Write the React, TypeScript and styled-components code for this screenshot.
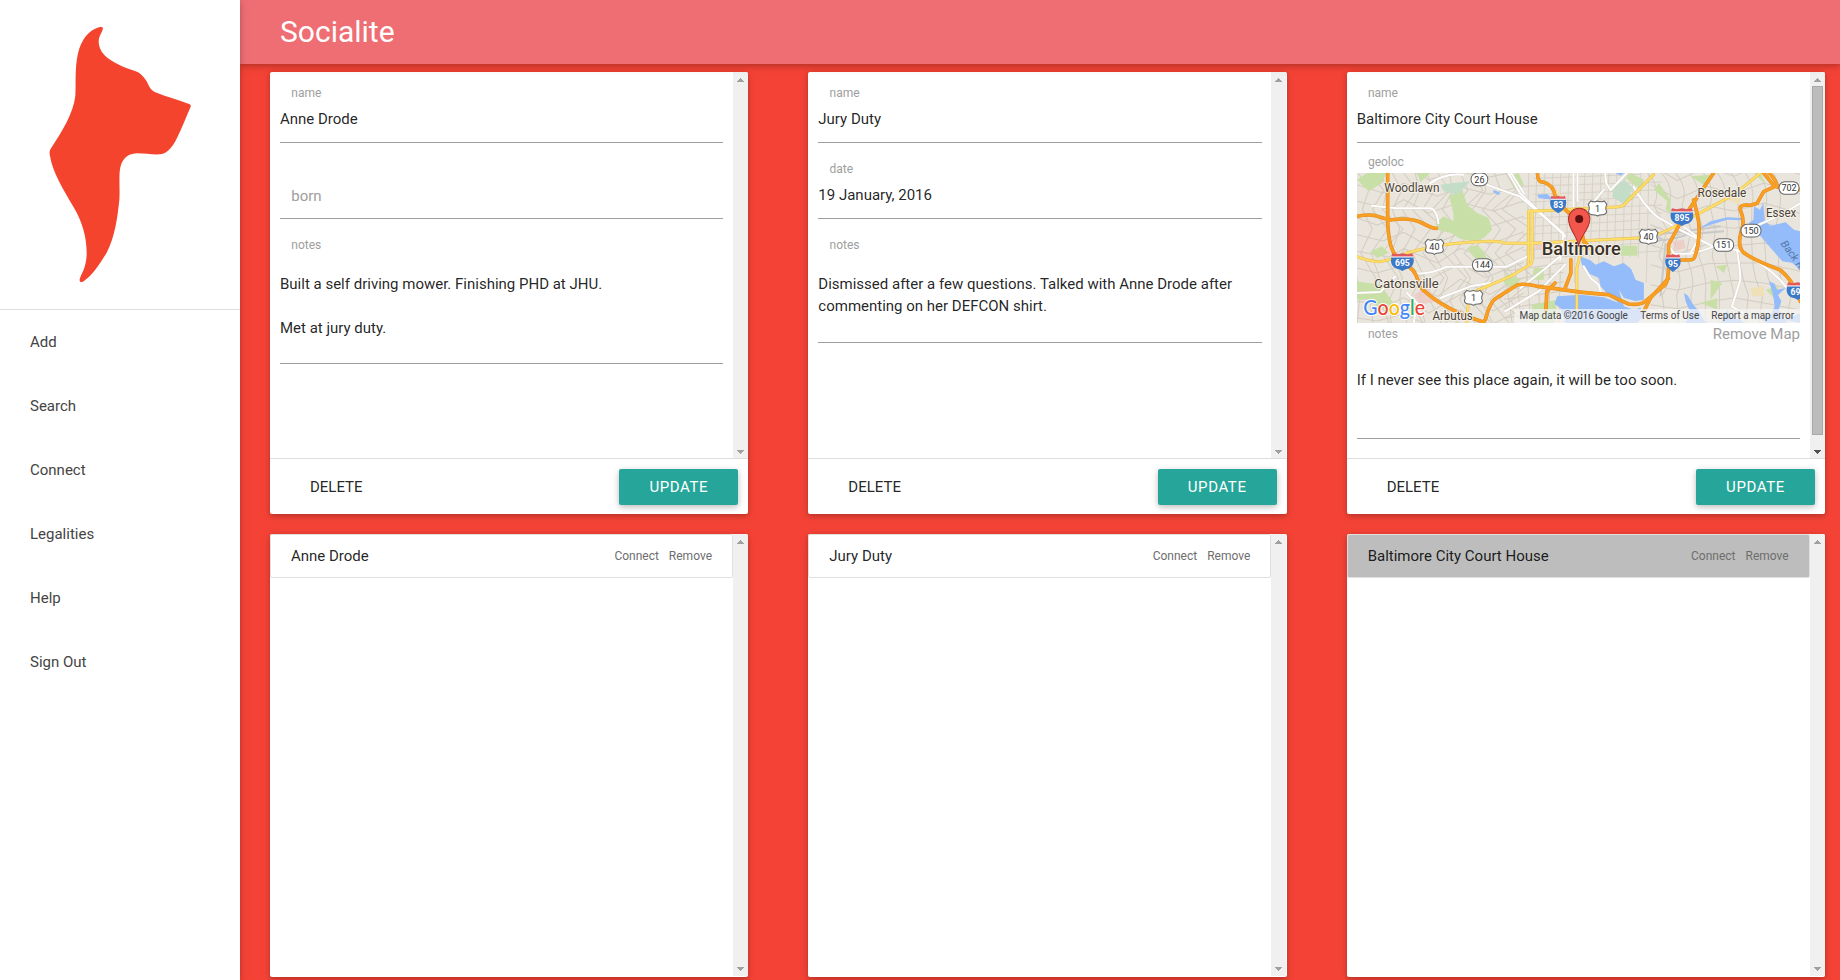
import React from "react";
import styled, { createGlobalStyle } from "styled-components";

const GlobalStyle = createGlobalStyle`
  *, *::before, *::after { box-sizing: border-box; }
  html, body { margin: 0; height: 100%; overflow: hidden; }
  body {
    background: #f44336;
    color: rgba(0, 0, 0, 0.87);
    font-family: Roboto, "Liberation Sans", sans-serif;
    font-size: 15px;
    line-height: 22px;
  }
`;

const Page = styled.div`
  display: grid;
  grid-template-columns: 240px 1fr;
  height: 980px;
  overflow: hidden;
`;

const Sidebar = styled.nav`
  z-index: 3;
  background: #fff;
  box-shadow: 0 2px 5px 0 rgba(0, 0, 0, 0.16), 0 2px 10px 0 rgba(0, 0, 0, 0.12);
`;

const LogoArea = styled.div`
  height: 310px;
  border-bottom: 1px solid #ddd;
  svg { display: block; }
`;

const NavItem = styled.a`
  display: block;
  height: 64px;
  padding-left: 30px;
  line-height: 64px;
  color: #444;
`;

const Main = styled.main`
  display: flex;
  flex-direction: column;
  min-width: 0;
`;

const Header = styled.header`
  z-index: 2;
  flex: none;
  height: 64px;
  padding-left: 40px;
  background: #ee6e73;
  box-shadow: 0 2px 5px 0 rgba(0, 0, 0, 0.16), 0 2px 10px 0 rgba(0, 0, 0, 0.12);
  color: #fff;
  font-size: 30px;
  line-height: 64px;
`;

const Board = styled.section`
  display: grid;
  grid-template-columns: repeat(3, 1fr);
  column-gap: 60px;
  padding: 8px 15px 0 30px;
`;

const Column = styled.div`
  display: flex;
  flex-direction: column;
  gap: 20px;
  min-width: 0;
`;

const Card = styled.article`
  display: flex;
  flex-direction: column;
  height: 442px;
  border-radius: 2px;
  overflow: hidden;
  background: #fff;
`;

const CardShadow = styled.div`
  border-radius: 2px;
  box-shadow: 0 2px 5px 0 rgba(0, 0, 0, 0.16), 0 2px 10px 0 rgba(0, 0, 0, 0.12);
`;

const ListCard = styled(Card)`
  height: 443px;
  padding-bottom: 1px;
`;

const ScrollArea = styled.div`
  display: flex;
  flex: 1;
  min-height: 0;
`;

const Form = styled.div`
  flex: 1;
  min-width: 0;
  padding: 0 9.66px 0 10px;
`;

const Field = styled.div<{ $first?: boolean }>`
  height: ${(p) => (p.$first ? 71 : 76)}px;
  padding-top: ${(p) => (p.$first ? 14 : 19)}px;
  border-bottom: 1px solid #9e9e9e;
`;

const Label = styled.div`
  padding-left: 11.25px;
  font-size: 12px;
  line-height: 14px;
  color: #9e9e9e;
`;

const Placeholder = styled.div`
  padding: 23px 0 0 11.25px;
  color: #9e9e9e;
`;

const Value = styled.div`
  padding-top: 8px;
`;

const Notes = styled.div`
  padding-top: 19px;
`;

const NotesText = styled.div<{ $bottom: number }>`
  margin-top: 21px;
  padding-bottom: ${(p) => p.$bottom}px;
  border-bottom: 1px solid #9e9e9e;
  white-space: pre-line;
`;

const Geo = styled.div`
  padding-top: 12px;
`;

const MapFrame = styled.div`
  height: 150px;
  margin-top: 4px;
  overflow: hidden;
  svg { display: block; width: 100%; height: 150px; }
`;

const MapFooter = styled.div`
  display: flex;
  justify-content: space-between;
  height: 25px;
  color: #9e9e9e;
  ${Label} { padding-top: 4px; }
`;

const Actions = styled.footer`
  display: flex;
  justify-content: space-between;
  flex: none;
  height: 56px;
  padding: 10px 10px 0 40px;
  border-top: 1px solid #ddd;
  text-transform: uppercase;
  line-height: 36px;
`;

const UpdateButton = styled.button`
  width: 119px;
  height: 36px;
  padding: 0;
  border: 0;
  border-radius: 2px;
  background: #26a69a;
  box-shadow: 0 2px 5px 0 rgba(0, 0, 0, 0.16), 0 2px 10px 0 rgba(0, 0, 0, 0.12);
  color: #fff;
  font: 15px/36px Roboto, sans-serif;
  letter-spacing: 0.6px;
  text-transform: uppercase;
`;

const List = styled.div`
  flex: 1;
  min-width: 0;
`;

const ListItem = styled.div<{ $selected?: boolean }>`
  display: flex;
  align-items: center;
  height: 44px;
  padding: 0 20px;
  border: 1px solid #e0e0e0;
  border-radius: 2px;
  background: ${(p) => (p.$selected ? "#bdbdbd" : "#fff")};
`;

const ItemName = styled.span`
  flex: 1;
`;

const ItemLink = styled.a`
  margin-left: 10px;
  font-size: 12px;
  color: #6e6e6e;
`;

const Track = styled.div<{ $foot: number }>`
  display: flex;
  flex-direction: column;
  align-items: center;
  flex: none;
  width: 15px;
  margin-right: 0.34px;
  padding: 6px 0 ${(p) => p.$foot}px;
  background: #f0f0f0;
`;

const Arrow = styled.svg`
  flex: none;
  display: block;
  width: 7px;
  height: 4px;
`;

const Thumb = styled.div<{ $visible?: boolean }>`
  flex: 1;
  width: 11px;
  margin: 4px 0 15px;
  ${(p) => p.$visible && "background: #bcbcbc; border: 1px solid #a8a8a8;"}
`;

function Scrollbar({ active, foot = 4 }: { active?: boolean; foot?: number }) {
  return (
    <Track $foot={foot}>
      <Arrow viewBox="0 0 7 4" shapeRendering="crispEdges">
        <path d="M3 0h1v1h1v1h1v1h1v1H0V3h1V2h1V1h1z" fill="#a0a0a0" />
      </Arrow>
      <Thumb $visible={active} />
      <Arrow viewBox="0 0 7 4" shapeRendering="crispEdges">
        <path d="M0 0h7v1H6v1H5v1H4v1H3V3H2V2H1V1H0z" fill={active ? "#505050" : "#a0a0a0"} />
      </Arrow>
    </Track>
  );
}

function Logo() {
  return (
    <svg width="240" height="309" viewBox="0 0 720 927">
      <path
        fill="#f4442e"
        d="M309 84C307 80 303 80 297 82C264 91 243 122 234 160C224 203 228 247 226 287C220 340 186 394 152 446C148 453 148 459 150 468C158 518 190 568 220 620C248 666 261 714 260 765C258 807 243 820 239 838C238 846 242 848 249 845C279 825 299 792 320 758C345 710 352 655 358 600C360 570 357 540 359 515C363 478 381 461 410 460C435 460 455 464 480 463C505 460 520 435 530 416C545 386 558 352 572 320C573 315 571 313 567 312C535 300 500 291 466 277C446 266 448 256 438 241C428 226 418 217 405 213C370 202 335 187 313 165C298 148 294 132 297 115C300 103 308 94 309 84Z"
      />
    </svg>
  );
}

const range = (n: number) => Array.from({ length: n }, (_, i) => i);

function Interstate({ x, y, w, n }: { x: number; y: number; w: number; n: string }) {
  const h = w / 2;
  return (
    <g transform={`translate(${x} ${y})`}>
      <path d={`M${-h} -14Q${-h - 5} 10 ${-h + 12} 20Q-6 23 0 28Q6 23 ${h - 12} 20Q${h + 5} 10 ${h} -14Z`} fill="#3b78c8" />
      <path d={`M${-h} -15L${-h + 3} -25Q${-h / 2} -20 0 -25Q${h / 2} -20 ${h - 3} -25L${h} -15Z`} fill="#e0595e" />
      <path d={`M${-h} -14H${h}`} stroke="#fff" strokeWidth="3" />
      <text y="12" textAnchor="middle" fontSize="26" fontWeight="700" fill="#fff">{n}</text>
    </g>
  );
}

function UsRoute({ x, y, n }: { x: number; y: number; n: string }) {
  return (
    <g transform={`translate(${x} ${y})`}>
      <path d="M-20 -22Q-10 -17 0 -22Q10 -17 20 -22L28 -12Q22 0 27 9Q26 19 14 19Q5 19 0 23Q-5 19 -14 19Q-26 19 -27 9Q-22 0 -28 -12Z" fill="#fff" stroke="#666" strokeWidth="3" />
      <text y="10" textAnchor="middle" fontSize="27" fill="#333">{n}</text>
    </g>
  );
}

function StateRoute({ x, y, w, n }: { x: number; y: number; w: number; n: string }) {
  return (
    <g transform={`translate(${x} ${y})`}>
      <rect x={-w / 2} y="-19" width={w} height="38" rx="18" fill="#fff" stroke="#666" strokeWidth="3" />
      <text y="10" textAnchor="middle" fontSize="27" fill="#333">{n}</text>
    </g>
  );
}

const highways = [
  "M92 0V150Q96 225 115 245L160 285Q180 300 187 340Q240 395 330 430L380 448",
  "M0 130Q30 124 50 127L99 141Q160 132 195 150T238 166",
  "M541 0Q541 28 558 27Q590 35 594 70L629 115Q655 130 672 170L680 205L695 220",
  "M375 450L385 440Q398 385 420 374L480 336Q500 330 540 340L594 347Q680 360 754 365Q784 380 814 393Q850 397 864 385L924 335Q934 320 934 281V215L974 141L1069 0",
  "M1009 81Q1026 141 1026 170Q1024 225 1011 255Q1008 261 995 261H949",
  "M860 415L879 376L934 316",
  "M641 260V300L624 345",
  "M594 330L569 355L566 415",
  "M1219 0L1252 41L1219 56L1199 91L1180 97Q1145 92 1149 110Q1164 145 1152 175Q1140 215 1155 235Q1180 258 1269 291Q1310 325 1329 385",
  "M1235 0Q1260 25 1259 42L1329 50",
];

const arterials = [
  "M0 251Q40 266 69 266Q110 260 149 240Q220 220 279 213Q390 201 429 206L444 211H519L650 205L844 195Q900 190 944 165L1009 130L1130 65L1209 0",
  "M329 450L334 381Q350 355 364 351L460 310L519 275Q528 270 525 240V115H514V275",
  "M514 115Q600 112 650 108L780 102Q800 101 810 85L889 5",
  "M672 215L672 235L659 285V410",
  "M655 205L672 225H700",
];

const whiteRoads = [
  "M44 98L119 106H219Q240 110 244 151", "M219 31Q260 0 319 5", "M379 31Q430 50 489 71L619 181L609 261",
  "M454 0L489 61L624 190", "M462 0L500 61", "M649 0V105M661 0V85", "M179 301Q220 304 269 281H449L509 251",
  "M744 0L747 30L760 51L809 0M829 41Q855 90 899 131L969 171L1069 221L1139 231Q1230 280 1269 321L1310 371",
  "M1139 231Q1149 290 1149 321L1124 401L1175 430", "M1169 171L1259 131L1329 91",
  "M624 275L544 355L444 415", "M609 250L560 290L490 345", "M679 280L700 315L724 335L732 360",
  "M940 225L950 242H1000Q1030 236 1069 221", "M0 360L70 357L115 310", "M170 450L180 390L150 360",
  "M740 50L700 98M980 162L1025 195M1000 240L1020 205", "M250 375L340 340L400 330",
];

function CityMap() {
  return (
    <svg viewBox="0 0 1329 450" preserveAspectRatio="none" fontFamily="Roboto, sans-serif">
      <rect width="1329" height="450" fill="#e9e5dc" />
      <g fill="none" stroke="#d3cdc1" strokeWidth="3">
        {range(16).map((i) => (
          <path
            key={`a${i}`}
            d={`M${i * 34 - 30} 0L${i * 33 - 10 + (i % 3) * 12} 52L${i * 30 - 14} 110L${i * 32 + (i % 4) * 14} 168L${i * 31 - 20} 240L${i * 34 + (i % 2) * 22} 315L${i * 30 + 8} 380L${i * 34 + (i % 3) * 14} 450`}
          />
        ))}
        {range(10).map((i) => (
          <path
            key={`b${i}`}
            d={`M0 ${i * 50 - 15}L${60 + (i % 3) * 18} ${i * 48 + 12}L140 ${i * 49 - 18}L${215 + (i % 2) * 26} ${i * 50 + 20}L310 ${i * 46 - 4}L${385 + (i % 3) * 12} ${i * 50 + 14}L500 ${i * 46 - 8}`}
          />
        ))}
        {range(16).map((i) => (
          <path key={`c${i}`} d={`M${515 + i * 24} 0L${507 + i * 24} ${i % 3 === 0 ? 330 : 255}`} strokeWidth="2.4" />
        ))}
        {range(11).map((i) => (
          <path key={`d${i}`} d={`M${i % 2 ? 495 : 530} ${16 + i * 24}L${i % 3 ? 915 : 850} ${4 + i * 23}`} strokeWidth="2.4" />
        ))}
        {range(10).map((i) => (
          <path
            key={`e${i}`}
            d={`M${870 + i * 42} 0Q${915 + i * 40} 45 ${890 + i * 42} 98L${930 + i * 36} 170L${905 + i * 40} 250Q${950 + i * 34} 320 ${915 + i * 43} 365L${925 + i * 40} 450`}
          />
        ))}
        {range(8).map((i) => (
          <path key={`f${i}`} d={`M880 ${i * 60 - 25}L960 ${i * 55 + 22}L1050 ${i * 58 - 18}L1130 ${i * 52 + 10}L1220 ${i * 60 - 30}L1329 ${i * 58 + 5}`} />
        ))}
        {range(6).map((i) => (
          <path key={`g${i}`} d={`M${440 + i * 34} 280L${465 + i * 28} 450M440 ${295 + i * 28}L620 ${270 + i * 28}`} />
        ))}
      </g>
      <g fill="#c9dfa8">
        <path d="M275 70L315 48L330 95L360 120L395 135L405 170L380 195L350 205L310 198L282 180L245 172L235 150L260 130L290 145L288 110Z" />
        <path d="M0 20L30 0H88L75 30L35 55ZM0 325L70 335L110 390L75 410L30 380H0ZM40 235L75 220L95 240L60 255Z" />
        <path d="M330 225L360 215L380 235L390 260L352 255ZM455 10L485 0L500 35L470 45ZM180 0H220L190 28ZM450 300L490 320L465 350L440 328Z" />
        <path d="M820 0L860 20L850 50L805 15ZM770 60L815 55L830 80L790 85ZM790 218H840V248H790ZM530 285H560V320H525ZM905 30L940 80V120L925 110L930 85L890 50Z" />
        <path d="M1075 280L1110 275L1100 300ZM1000 10L1060 5L1045 40ZM1060 380L1095 330L1060 320ZM1190 0H1210L1225 35ZM1225 350L1265 340L1250 375ZM525 395L600 380L590 450H520ZM1030 390L1080 375L1080 410Z" />
      </g>
      <path d="M250 35L290 30L340 25L300 65L260 55ZM770 45L800 20L828 45L800 95L765 70Z" fill="#c4ddc8" />
      <g fill="#edc9c5" opacity=".8"><path d="M170 365L210 340L240 385L185 395ZM945 205L980 200L985 225L955 235ZM535 210H570V228H535Z" /></g>
      <g fill="#f0e0b6"><path d="M1110 55L1150 70L1145 95L1115 80ZM1180 345L1220 340V370H1185ZM590 40L620 75L600 85Z" /></g>
      <g fill="#94bcfb">
        <path d="M668 250L700 262L715 275L740 265L770 280L800 270L822 288L835 320L860 330V380L835 384L800 375L785 350L800 400L830 410L850 404L858 430L840 450H625L610 405L592 393L600 370L670 365L740 373L785 390L750 362L730 340L725 315L690 300L675 278Z" />
        <path d="M1190 100L1208 110L1218 90L1222 145L1240 158L1285 148L1310 170L1329 175V292L1305 270L1275 265L1240 225L1210 190L1190 175L1175 150L1188 140Z" />
        <path d="M1235 325L1252 332L1258 350L1285 345L1262 366L1272 385L1264 410L1290 450H1225L1205 435L1240 425L1252 400L1247 365ZM1280 440L1329 420V450ZM980 360L992 368L1008 395L1028 418L1045 450H985L1000 420L985 385ZM1090 450L1110 410L1125 435L1150 440L1160 450Z" />
        <path d="M540 65L570 63L590 80L545 76ZM410 50L430 60L425 66L408 58ZM775 0L800 0L790 8ZM1020 170L1060 145L1110 133L1150 135L1155 142L1110 140L1060 155Z" />
      </g>
      <g fill="none" stroke="#c9c9c9" strokeWidth="6">
        <path d="M845 190Q890 185 965 178L1090 160M850 205Q940 205 990 184L1100 175M925 210L910 370M890 185L925 205" />
      </g>
      <g fill="none" strokeLinecap="round" strokeLinejoin="round">
        {whiteRoads.map((d) => <path key={d} d={d} stroke="#d3ccc2" strokeWidth="8" />)}
        {whiteRoads.map((d) => <path key={d} d={d} stroke="#fff" strokeWidth="6" />)}
        {arterials.map((d) => <path key={d} d={d} stroke="#e5bd55" strokeWidth="9" />)}
        {arterials.map((d) => <path key={d} d={d} stroke="#ffdf67" strokeWidth="6" />)}
        {highways.map((d) => <path key={d} d={d} stroke="#e08a1e" strokeWidth="11" />)}
        {highways.map((d) => <path key={d} d={d} stroke="#fb9f22" strokeWidth="8" />)}
      </g>

      <StateRoute x={367} y={19} w={50} n="26" />
      <StateRoute x={376} y={276} w={60} n="144" />
      <StateRoute x={1099} y={216} w={60} n="151" />
      <StateRoute x={1181} y={173} w={60} n="150" />
      <StateRoute x={1295} y={45} w={60} n="702" />
      <UsRoute x={232} y={221} n="40" />
      <UsRoute x={349} y={374} n="1" />
      <UsRoute x={721} y={106} n="1" />
      <UsRoute x={874} y={191} n="40" />
      <Interstate x={603} y={93} w={46} n="83" />
      <Interstate x={136} y={266} w={66} n="695" />
      <Interstate x={974} y={131} w={66} n="895" />
      <Interstate x={947} y={269} w={44} n="95" />
      <Interstate x={1322} y={353} w={66} n="695" />

      <g fill="#4b4338" stroke="#f5f1e9" strokeWidth="6" strokeLinejoin="round" paintOrder="stroke" fontSize="37">
        <text x="82" y="57" textLength="165" lengthAdjust="spacingAndGlyphs">Woodlawn</text>
        <text x="52" y="344" textLength="193" lengthAdjust="spacingAndGlyphs">Catonsville</text>
        <text x="226" y="440" textLength="121" lengthAdjust="spacingAndGlyphs">Arbutus</text>
        <text x="1021" y="72" textLength="146" lengthAdjust="spacingAndGlyphs">Rosedale</text>
        <text x="1226" y="133" textLength="91" lengthAdjust="spacingAndGlyphs">Essex</text>
        <text x="554" y="247" textLength="237" lengthAdjust="spacingAndGlyphs" fontSize="53" fontWeight="500" fill="#3a3128">Baltimore</text>
      </g>
      <text transform="translate(1269 212) rotate(54)" fontSize="32" fontStyle="italic" fill="#5377a8">Back River</text>

      <ellipse cx="668" cy="219" rx="8" ry="3" fill="#000" opacity=".25" />
      <path d="M664 220C662 190 634 170 634 138A32 32 0 0 1 698 138C698 170 667 190 664 220Z" fill="#f2564c" stroke="#a8322a" strokeWidth="3" />
      <circle cx="666" cy="138" r="12" fill="#5e1010" />

      <text x="19" y="427" fontFamily="Lato, sans-serif" fontSize="64" textLength="185" lengthAdjust="spacingAndGlyphs" fontWeight="500" stroke="#fff" strokeWidth="6" paintOrder="stroke" strokeLinejoin="round">
        <tspan fill="#4285f4">G</tspan><tspan fill="#ea4335">o</tspan><tspan fill="#fbbc05">o</tspan><tspan fill="#4285f4">g</tspan><tspan fill="#34a853">l</tspan><tspan fill="#ea4335">e</tspan>
      </text>

      <rect x="472" y="408" width="857" height="42" fill="#f5f5f5" opacity=".72" />
      <g fontSize="31" fill="#444">
        <text x="487" y="437" textLength="325" lengthAdjust="spacingAndGlyphs">Map data ©2016 Google</text>
        <text x="849" y="437" textLength="177" lengthAdjust="spacingAndGlyphs">Terms of Use</text>
        <text x="1062" y="437" textLength="248" lengthAdjust="spacingAndGlyphs">Report a map error</text>
      </g>
    </svg>
  );
}

interface Entry {
  name: string;
  field?: { label: string; value?: string };
  map?: boolean;
  notes: string;
  space: number;
}

const entries: Entry[] = [
  {
    name: "Anne Drode",
    field: { label: "born" },
    notes: "Built a self driving mower. Finishing PHD at JHU.\n\nMet at jury duty.",
    space: 24,
  },
  {
    name: "Jury Duty",
    field: { label: "date", value: "19 January, 2016" },
    notes: "Dismissed after a few questions. Talked with Anne Drode after commenting on her DEFCON shirt.",
    space: 25,
  },
  { name: "Baltimore City Court House", map: true, notes: "If I never see this place again, it will be too soon.", space: 47 },
];

function EntryCard({ entry }: { entry: Entry }) {
  return (
    <CardShadow>
      <Card>
        <ScrollArea>
          <Form>
            <Field $first>
              <Label>name</Label>
              <Value>{entry.name}</Value>
            </Field>
            {entry.field && (
              <Field>
                {entry.field.value ? (
                  <>
                    <Label>{entry.field.label}</Label>
                    <Value>{entry.field.value}</Value>
                  </>
                ) : (
                  <Placeholder>{entry.field.label}</Placeholder>
                )}
              </Field>
            )}
            {entry.map ? (
              <Geo>
                <Label>geoloc</Label>
                <MapFrame>
                  <CityMap />
                </MapFrame>
                <MapFooter>
                  <Label>notes</Label>
                  <span>Remove Map</span>
                </MapFooter>
                <NotesText $bottom={entry.space}>{entry.notes}</NotesText>
              </Geo>
            ) : (
              <Notes>
                <Label>notes</Label>
                <NotesText $bottom={entry.space}>{entry.notes}</NotesText>
              </Notes>
            )}
          </Form>
          <Scrollbar active={entry.map} />
        </ScrollArea>
        <Actions>
          <span>Delete</span>
          <UpdateButton>Update</UpdateButton>
        </Actions>
      </Card>
    </CardShadow>
  );
}

export default function App() {
  return (
    <>
      <GlobalStyle />
      <Page>
        <Sidebar>
          <LogoArea>
            <Logo />
          </LogoArea>
          {["Add", "Search", "Connect", "Legalities", "Help", "Sign Out"].map((item) => (
            <NavItem key={item}>{item}</NavItem>
          ))}
        </Sidebar>
        <Main>
          <Header>Socialite</Header>
          <Board>
            {entries.map((entry) => (
              <Column key={entry.name}>
                <EntryCard entry={entry} />
                <CardShadow>
                  <ListCard>
                    <ScrollArea>
                      <List>
                        <ListItem $selected={entry.map}>
                          <ItemName>{entry.name}</ItemName>
                          <ItemLink>Connect</ItemLink>
                          <ItemLink>Remove</ItemLink>
                        </ListItem>
                      </List>
                      <Scrollbar foot={5} />
                    </ScrollArea>
                  </ListCard>
                </CardShadow>
              </Column>
            ))}
          </Board>
        </Main>
      </Page>
    </>
  );
}
